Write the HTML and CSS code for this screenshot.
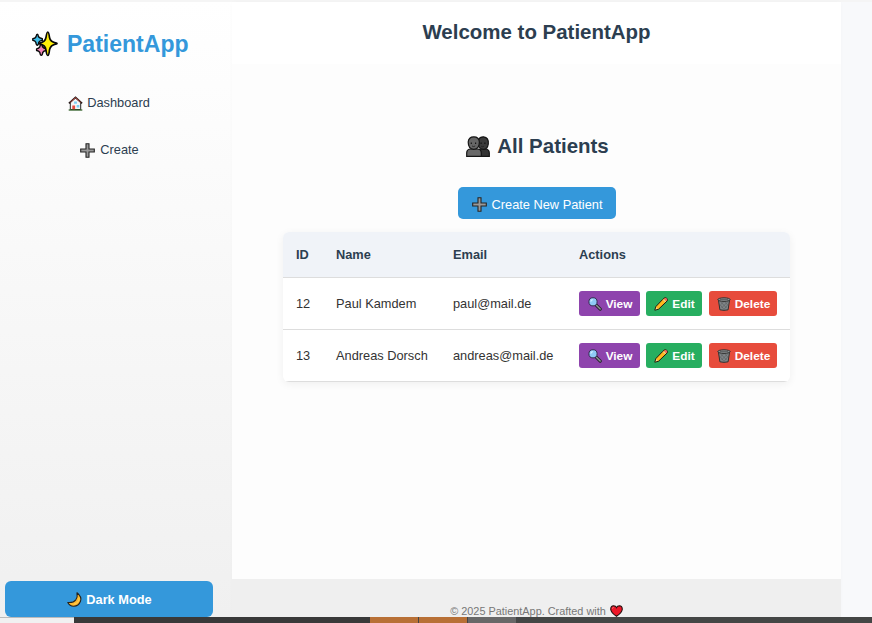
FILE: index.html
```html
<!DOCTYPE html>
<html lang="en">
<head>
<meta charset="utf-8">
<title>PatientApp</title>
<link rel="stylesheet" href="styles.css">
</head>
<body>
<svg class="defs" aria-hidden="true">
  <defs>
    <symbol id="plus" viewBox="0 0 15 15"><path d="M6 .7h3v5.3h5.3v3H9v5.3H6V9H.7V6H6z" fill="#999" stroke="#252525" stroke-width="1.1"/></symbol>
    <symbol id="search" viewBox="0 0 14 14"><path d="M8.200 8.200l4 3.900" stroke="#202226" stroke-width="3.200" stroke-linecap="round"/><path d="M8.600 8.500l3.600 3.500" stroke="#8d9197" stroke-width="1.500" stroke-linecap="round"/><circle cx="5" cy="4.800" r="4.100" fill="#8fcbf5" stroke="#352f50" stroke-width="1"/><path d="M2.800 4.600a2.200 2.200 0 0 1 2-2" fill="none" stroke="#d4efff" stroke-width="1.100"/></symbol>
    <symbol id="pencil" viewBox="0 0 14 14"><path d="M.8 13.200L1.900 9.500 9.900 1.200Q11.400 0 12.800 1.300T13 4.100L4.600 12.200z" fill="#ffb91d" stroke="#1c1c15" stroke-linejoin="round"/><path d="M10.200 1.900l.8-.6q.8-.5 1.600.3t.2 1.700l-.7.7z" fill="#ef5d72"/><path d="M9.300 2.700l2.100 2.100" stroke="#d8dfe0"/><path d="M1.600 12.400l.8-2.200 1.400 1.400z" fill="#ffe0a3"/></symbol>
    <symbol id="trash" viewBox="0 0 14 14"><path d="M1.500 3.500h11l-1.400 9.300q-4.100 1.100-8.200 0z" fill="#808588" stroke="#30302f"/><path d="M3.800 5l5.800 6M6.800 4l4 4M3.400 8l3.700 4.500M10.500 5l-6 6M7.500 4L3.300 8M10.600 8L7 12.400" stroke="#5b6062" stroke-width=".7"/><ellipse cx="7" cy="2.600" rx="6.200" ry="1.800" fill="#8d9193" stroke="#30302f"/><path d="M3 2.700h8" stroke="#565a5c"/></symbol>
  </defs>
</svg>
<div class="topline"></div>
<div class="app">
  <aside class="sidebar">
    <div class="brand">
      <svg class="i-sparkle" viewBox="0 0 26 26"><g stroke="#090909" stroke-width="1.400" stroke-linejoin="round"><path d="M5.300 3.200q.8 0 1.200 2.600 1 1.300 3.800 2v1.600q-2.800.4-3.500 1.900-.5 2.900-1.500 2.900t-1.500-2.900Q3.100 9.800.8 9.300V7.700q2.400-.4 3.200-1.900.5-2.600 1.300-2.600z" fill="#3fbde9"/><path d="M9.300 13.200q.8 0 1.200 2.700 1 1.400 3.800 2v1.600q-2.800.5-3.500 1.900-.5 3-1.500 3t-1.500-3q-.9-1.600-3.200-1.900v-1.600q2.400-.5 3.200-2 .5-2.700 1.500-2.700z" fill="#f385b7"/></g><path d="M15.800 1q1 0 1.700 5.300.6 4.500 6.900 5.700 1.200.4 0 .9-6.100 1.200-6.900 6-.6 5.600-1.700 5.600t-1.800-5.500q-.7-4.900-6.300-6.100-1-.5 0-.9 5.600-1.100 6.300-5.700Q14.800 1 15.800 1z" fill="#ffee09" stroke="#090909" stroke-width="1.700" stroke-linejoin="round"/></svg>
      <span>PatientApp</span>
    </div>
    <nav class="nav">
      <a class="link"><svg class="i-home" viewBox="0 0 15 15"><path d="M2.300 6.500L7.500 1.800l5.200 4.700v7H2.300z" fill="#f5f4f4" stroke="#282828"/><path d="M.9 7.400l6.600-6 6.600 6" fill="none" stroke="#281c1b" stroke-width="1.700"/><path d="M2.300 6.300l5.200-4.600 5.200 4.600" fill="none" stroke="#dc5147" stroke-width=".7"/><path d="M4.300 9.500h2.800v4H4.300z" fill="#e5483d"/><path d="M8.700 9h2.600v2.400H8.700zM6.100 5.400h2.800v2.300H6.100z" fill="#79cff3"/><path d="M.7 14h13.600" stroke="#315f28" stroke-width="1.300"/></svg>Dashboard</a>
      <a class="link link-create"><svg class="i-plus"><use href="#plus"/></svg>Create</a>
    </nav>
    <button class="mode"><svg class="i-moon" viewBox="0 0 15 15"><path d="M10 .8q5.200 4.200 3.500 8.500-1.900 5-7 4.900Q2.700 14 .8 10.500q5.600.5 8-2.700Q10.800 5 10 .8z" fill="#fbb72c" stroke="#26221c" stroke-width="1.100" stroke-linejoin="round"/><path d="M12.100 5.700q.4 5-5.300 6.600" fill="none" stroke="#ffd562" stroke-width=".8"/></svg><span>Dark Mode</span></button>
  </aside>
  <main class="main">
    <header class="header"><h1>Welcome to PatientApp</h1></header>
    <section class="content">
      <h2><svg class="i-people" viewBox="0 0 24 22"><g stroke="#151515" stroke-width="1.200"><path d="M11 20.400V16q0-3 3.500-3H19q4.300 0 4.300 4v3.400z" fill="#333"/><path d="M12 4q2-3.300 5.500-3.200Q23 1.500 22.300 8q-.8 5.300-4.800 5.400Q13 13 12 8z" fill="#3b3b3b"/><path d="M.7 20.400V17q0-4 4.300-4h6q4.300 0 4.300 4v3.400z" fill="#696969"/><path d="M2.200 6Q2.600.8 7.800.8T13.400 6q0 7-5.600 7.400Q2.200 13 2.200 6z" fill="#666"/></g><path d="M5.300 6.500v1.400m4.300-1.400v1.400m5.500-1.400v1.400m3.800-1.400v1.400" stroke="#111" stroke-width="1.100"/><path d="M6 10q1.600 1.100 3.200 0m6 .3q1.400.8 2.800 0" fill="none" stroke="#202020" stroke-width=".8"/></svg>All Patients</h2>
      <button class="create"><svg class="i-plus"><use href="#plus"/></svg><span>Create New Patient</span></button>
      <table class="patients">
        <colgroup><col class="c-id"><col class="c-name"><col class="c-email"><col class="c-actions"></colgroup>
        <thead><tr><th>ID</th><th>Name</th><th>Email</th><th>Actions</th></tr></thead>
        <tbody>
          <tr><td>12</td><td>Paul Kamdem</td><td>paul@mail.de</td><td><div class="actions"><button class="btn view"><svg><use href="#search"/></svg>View</button><button class="btn edit"><svg><use href="#pencil"/></svg>Edit</button><button class="btn delete"><svg><use href="#trash"/></svg>Delete</button></div></td></tr>
          <tr><td>13</td><td>Andreas Dorsch</td><td>andreas@mail.de</td><td><div class="actions"><button class="btn view"><svg><use href="#search"/></svg>View</button><button class="btn edit"><svg><use href="#pencil"/></svg>Edit</button><button class="btn delete"><svg><use href="#trash"/></svg>Delete</button></div></td></tr>
        </tbody>
      </table>
    </section>
    <footer class="footer">© 2025 PatientApp. Crafted with<svg class="i-heart" viewBox="0 0 13 12"><path d="M6.500 11.300Q1 7.500.7 4.200.8.800 3.600.7 5.700.8 6.500 2.600 7.300.8 9.400.7q2.800.1 2.900 3.500Q12 7.500 6.500 11.300z" fill="#ed1728" stroke="#25100f" stroke-width="1.100"/><path d="M2.400 3.600q.1-1 1.200-1.300" fill="none" stroke="#ff8790" stroke-width=".9"/></svg></footer>
  </main>
</div>
<div class="taskbar"><span class="status"></span><span class="gap"></span><span class="task"></span><span class="task"></span><span class="task grey"></span></div>
</body>
</html>
```
FILE: styles.css
```css
* { box-sizing: border-box; }
body {
  margin: 0;
  height: 623px;
  display: flex;
  flex-direction: column;
  overflow: hidden;
  background: #f8f9fb;
  color: #333;
  font: 12.8px/20px "Liberation Sans", Arial, sans-serif;
}
svg { display: block; flex: none; overflow: visible; }
.defs { position: absolute; width: 0; height: 0; }
button { border: 0; padding: 0; font: inherit; color: #fff; display: flex; align-items: center; }
.topline { height: 2px; flex: none; background: #f5f5f5; }
.app { display: flex; flex: none; height: 615px; }
.sidebar {
  width: 232px;
  padding: 24px 19px 0 5px;
  display: flex;
  flex-direction: column;
  background: linear-gradient(#fff, #f0f0f0);
}
.brand {
  height: 36px;
  padding-left: 27px;
  display: flex;
  align-items: center;
  gap: 9px;
  color: #3498db;
  font-size: 23.04px;
  font-weight: bold;
}
.i-sparkle { width: 26px; height: 26px; }
.nav { display: flex; flex-direction: column; align-items: center; gap: 27px; margin-top: 31px; }
.link { display: flex; align-items: center; gap: 4px; height: 20px; color: #2c3e50; }
.link-create { gap: 5px; padding-left: 1px; }
.i-home { width: 15px; height: 15px; }
.i-plus { width: 15px; height: 15px; }
.mode {
  height: 36px;
  margin-top: auto;
  padding-top: 1px;
  justify-content: center;
  gap: 4px;
  padding-left: 1px;
  border-radius: 6px;
  background: #3498db;
  font-weight: bold;
}
.i-moon { width: 15px; height: 15px; }
.main { width: 609px; display: flex; flex-direction: column; box-shadow: 0 0 4px rgba(0, 0, 0, .02); }
.header { height: 62px; padding-bottom: 2px; display: flex; justify-content: center; align-items: center; background: #fff; }
h1, h2 { margin: 0; color: #2c3e50; font-size: 20.48px; line-height: 26px; }
.content { height: 515px; padding-top: 69px; display: flex; flex-direction: column; align-items: center; background: #fdfdfd; }
h2 { display: flex; align-items: center; gap: 7px; padding-left: 2px; }
.i-people { width: 24px; height: 22px; margin-top: 2px; }
.create { width: 158px; height: 32px; margin-top: 28px; padding: 2px 0 0 1px; justify-content: center; gap: 5px; border-radius: 5px; background: #3498db; }
.create span { padding-top: 1px; }
.patients {
  width: 507px;
  margin-top: 13px;
  table-layout: fixed;
  border-spacing: 0;
  border-radius: 6px;
  overflow: hidden;
  background: #fff;
  box-shadow: 0 2px 8px rgba(0, 0, 0, .06);
}
.c-id { width: 40px; }
.c-name { width: 117px; }
.c-email { width: 126px; }
.c-actions { width: 224px; }
th, td { height: 52px; padding: 0 0 0 13px; text-align: left; border-bottom: 1px solid #ddd; }
th { height: 46px; background: #f0f3f8; color: #2c3e50; }
.actions { display: flex; gap: 6px; }
.btn { height: 25px; padding-left: 1px; justify-content: center; gap: 4px; border-radius: 3px; font-size: 11.84px; font-weight: bold; }
.btn svg { width: 14px; height: 14px; }
.view { width: 61px; background: #8e44ad; }
.edit { width: 56px; background: #27ae60; }
.delete { width: 68px; margin-left: 1px; background: #e74c3c; }
.footer {
  height: 38px;
  padding-top: 26px;
  display: flex;
  justify-content: center;
  gap: 4px;
  background: #efefef;
  color: #777;
  font-size: 10.88px;
  line-height: 12px;
}
.i-heart { width: 13px; height: 12px; }
.taskbar { height: 6px; flex: none; display: flex; background: #444645; }
.status { width: 74px; background: #f1f1f1; border-top: 1px solid #bbb; }
.gap { width: 296px; background: #393939; }
.task { width: 49px; background: #b87036; border-right: 1px solid #444; }
.grey { width: 48px; background: #686868; border: 0; }
```
